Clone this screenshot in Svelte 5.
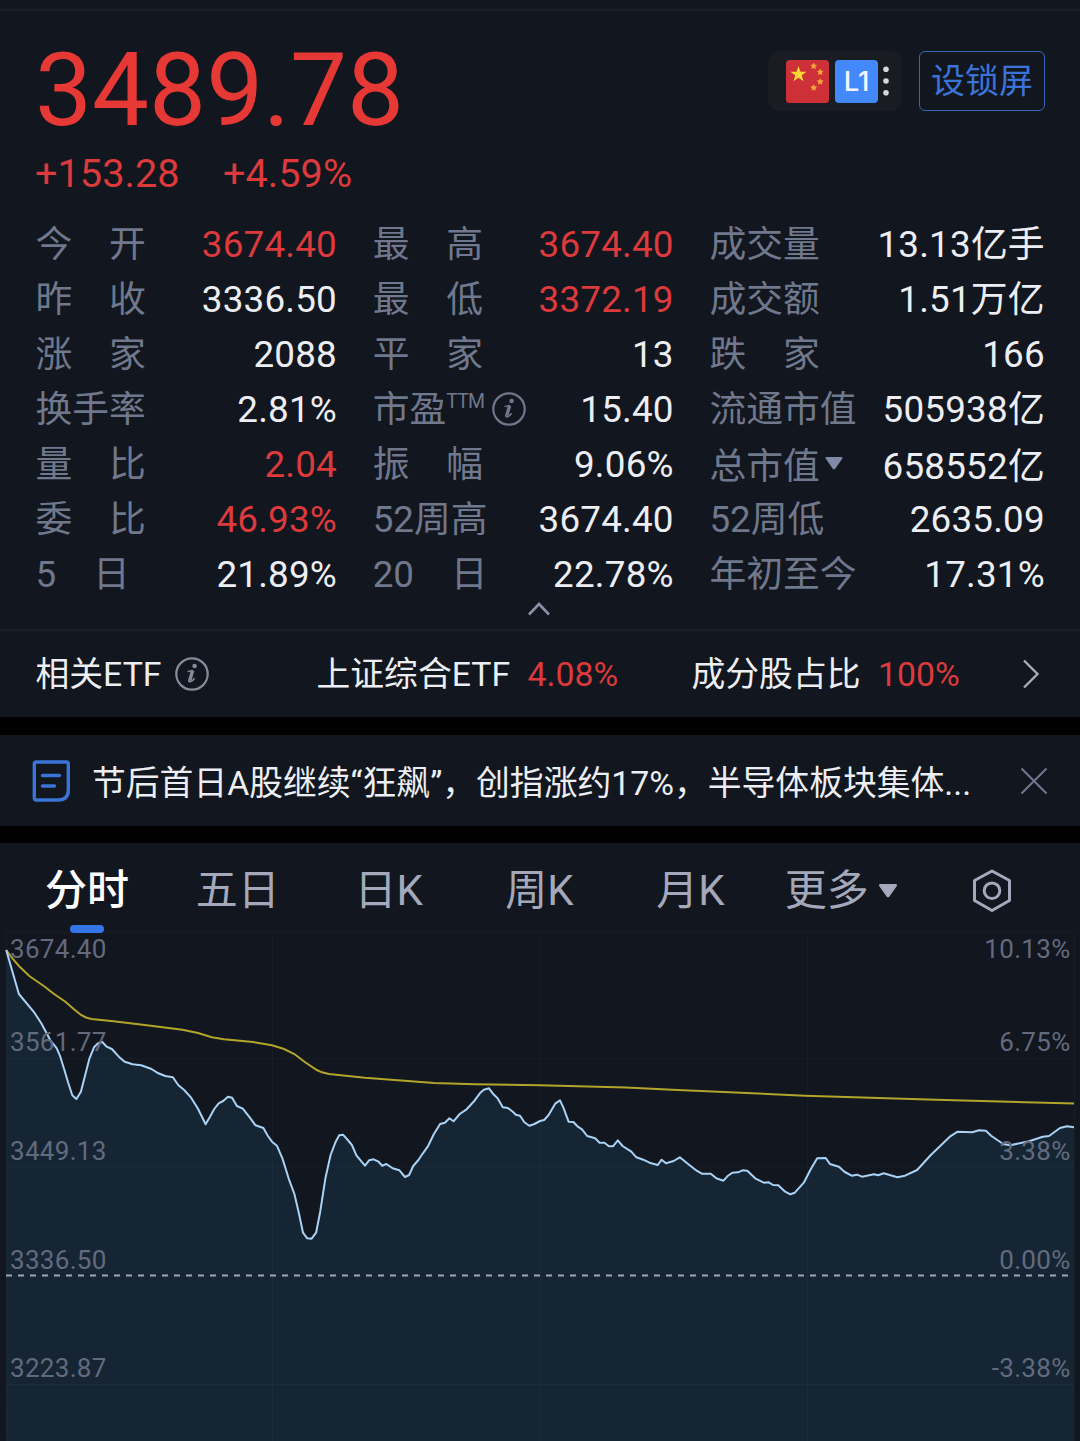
<script lang="ts">
	type Stat = {
		label: string;
		value: string;
		up?: boolean;
		sup?: string;
		info?: boolean;
		menu?: boolean;
	};

	const stats: Stat[] = [
		{ label: '今\u3000开', value: '3674.40', up: true },
		{ label: '最\u3000高', value: '3674.40', up: true },
		{ label: '成交量', value: '13.13亿手' },
		{ label: '昨\u3000收', value: '3336.50' },
		{ label: '最\u3000低', value: '3372.19', up: true },
		{ label: '成交额', value: '1.51万亿' },
		{ label: '涨\u3000家', value: '2088' },
		{ label: '平\u3000家', value: '13' },
		{ label: '跌\u3000家', value: '166' },
		{ label: '换手率', value: '2.81%' },
		{ label: '市盈', sup: 'TTM', info: true, value: '15.40' },
		{ label: '流通市值', value: '505938亿' },
		{ label: '量\u3000比', value: '2.04', up: true },
		{ label: '振\u3000幅', value: '9.06%' },
		{ label: '总市值', value: '658552亿', menu: true },
		{ label: '委\u3000比', value: '46.93%', up: true },
		{ label: '52周高', value: '3674.40' },
		{ label: '52周低', value: '2635.09' },
		{ label: '5\u3000日', value: '21.89%' },
		{ label: '20\u3000日', value: '22.78%' },
		{ label: '年初至今', value: '17.31%' }
	];

	const tabs = ['分时', '五日', '日K', '周K', '月K', '更多'];
	let activeTab = $state('分时');
	let showNews = $state(true);

	const axis = [
		{ y: 957.5, price: '3674.40', pct: '10.13%' },
		{ y: 1050.5, price: '3561.77', pct: '6.75%' },
		{ y: 1159.5, price: '3449.13', pct: '3.38%' },
		{ y: 1268.5, price: '3336.50', pct: '0.00%' },
		{ y: 1376.5, price: '3223.87', pct: '-3.38%' }
	];

	// intraday index line
	const price =
		'6.2,950 18.9,994 34.4,1012.7 41.3,1023.3 50.6,1040.7 56.8,1048.3 60.3,1056.7 64.4,1070 68.2,1082.7 72.3,1095.3 76.4,1099 80.9,1091.7 85.4,1074.3 89.5,1058.3 94,1047.3 98.1,1043.3 102.3,1042 106.7,1046.7 111.9,1049 118.8,1056.7 124.7,1061.7 132.6,1064.3 141.2,1065.3 151.5,1069 158.4,1073.3 165.3,1076 172.9,1077.3 178.4,1085.3 184.2,1090 191.1,1097.7 198,1108.7 203.2,1119.3 205.6,1124.3 210,1116.7 214.2,1109 218.7,1103.3 223.1,1101 228,1096.7 232.1,1097.7 236.9,1106 242.8,1108.7 249.7,1117.3 255.5,1125.3 263.4,1128 267.9,1136 272,1141.7 276.9,1145.7 282.4,1158.3 288.6,1178.3 294.4,1194 298.9,1213.3 303,1232.7 307.2,1238.3 311.6,1238.7 316.1,1232.7 320.2,1211.7 325.4,1178.3 330.6,1155 335.7,1141.7 339.2,1135.3 343,1134.7 347.8,1140 351.9,1145 356.4,1155.3 361.6,1161.7 365,1165.7 369.1,1160.3 373.6,1159.3 378.1,1161.3 382.2,1165.7 386.4,1164 392.6,1168.3 399.4,1170.3 405,1177 409.1,1175 413.2,1166 418.4,1160 422.9,1153.3 427.7,1146.7 433.9,1134 440.1,1124 444.9,1122.7 449.4,1118.3 453.5,1121.3 459.7,1114 466.6,1109.3 474.5,1100.7 480.4,1092.7 483.8,1089.7 489,1088.3 493.5,1094.3 497.6,1098.3 502.8,1107.3 507.9,1108 513.1,1112 515.8,1114.7 520,1115.7 524.4,1122.3 529.3,1125.7 534.4,1124 540,1121 ' +
		'544.1,1120 548.6,1115 555.5,1103.3 560,1100.3 563.4,1107.7 568.6,1121.7 573.4,1122 577.9,1126.7 582,1129.3 587.2,1136 595.1,1138.3 599.6,1142.7 604.4,1142.7 608.9,1146.3 613,1146.3 617.8,1140.3 622.6,1146 631.3,1151.7 636.4,1157.3 643.3,1159.7 649.5,1162.7 657.8,1165 661.6,1159.7 666,1163.3 673.6,1161 679.8,1157.3 688.1,1164 696.7,1170.7 701.8,1173.7 710.8,1173.7 716.3,1178.3 723.5,1180.7 728,1175.7 732.2,1172.7 738,1172.3 742.5,1170.3 747.3,1170.7 755.2,1178.3 763.8,1182.7 768.7,1182.3 773.1,1185 778.3,1185.3 785.2,1191.7 790.3,1194.3 794.8,1192.7 803.8,1182.7 810.3,1170 817.2,1158.3 825.8,1158 829.9,1164 838.9,1166.7 844.8,1172 851.6,1175.7 857.2,1174.7 862,1176.7 874,1174.3 878.2,1175.3 883.7,1173.3 897.4,1177.3 905,1175.7 917.1,1170 930.8,1155 939.4,1146.7 949.8,1136.7 957.7,1131.7 972.2,1132.3 979,1130.3 985.9,1130.7 991.1,1135.7 1003.2,1144 1010,1145.3 1029,1141.3 1042.8,1136.7 1049,1136 1060,1128 1066.9,1126.3 1074,1127.3';

	// average price line
	const average =
		'6.2,950 12,958 18.9,966 29.3,976 44.8,986.7 53.4,993.5 65.4,1001.7 74,1009.3 81,1015 86,1017.5 91.3,1019 113.6,1021.3 144.6,1025 182.5,1029.7 198,1033 211.8,1037.3 223.8,1039.3 253,1042 272,1045.3 284,1049 294.4,1054 304.8,1062 316.8,1070 322,1072.3 328.9,1074 365,1077.7 434,1083 475,1084.3 540,1085.3 626,1087.6 677.7,1090 805,1095.7 936,1099.7 1074,1103.5';
</script>

{#snippet infoIcon()}
	<svg class="info" width="34" height="34" viewBox="0 0 34 34" fill="none" stroke="currentColor">
		<circle cx="17" cy="17" r="15.7" stroke-width="2.2" />
		<circle cx="19.6" cy="9" r="2.3" fill="currentColor" stroke="none" />
		<path d="M12.6 14.6c2-.2 3.6-.8 5.2-1.5" stroke-width="1.5" />
		<path d="M17.6 13.6L14.8 23.5" stroke-width="3.4" />
		<path d="M13.8 22.8c-.6 3 3 2.5 5.8-1.6" stroke-width="1.6" />
	</svg>
{/snippet}

<main>
	<section class="overview">
		<div class="top">
			<div>
				<div class="last">3489.78</div>
				<div class="change"><span>+153.28</span><span>+4.59%</span></div>
			</div>
			<div class="actions">
				<div class="badges">
					<svg width="43" height="43" viewBox="0 0 43 43">
						<rect width="43" height="43" rx="3.5" fill="#cd3037" />
						<path
							d="M12.5 6l2 5.7h6.1l-4.9 3.6 1.8 5.9-5-3.5-5 3.5 1.8-5.9-4.9-3.6h6.1z"
							fill="#fdd835"
						/>
						{#each [[27.7, 6], [34.2, 12], [34.2, 21.6], [27.7, 27.6]] as [x, y]}
							<path
								transform="translate({x} {y})"
								d="M0-2.9l.9 1.8 2 .3-1.4 1.4.3 2-1.8-.9-1.8.9.3-2-1.4-1.4 2-.3z"
								fill="#f3a43a"
								stroke="#f3a43a"
								stroke-width=".6"
							/>
						{/each}
					</svg>
					<span class="level">L1</span>
					<svg width="6" height="30" viewBox="0 0 6 30" fill="#d6d8dc">
						<circle cx="3" cy="3.2" r="2.8" />
						<circle cx="3" cy="15" r="2.8" />
						<circle cx="3" cy="26.8" r="2.8" />
					</svg>
				</div>
				<button class="lock">设锁屏</button>
			</div>
		</div>

		<div class="stats">
			{#each stats as s}
				<div class="stat" class:lower={s.menu}>
					<span class="label">
						{s.label}{#if s.sup}<sup>{s.sup}</sup>{/if}
						{#if s.info}{@render infoIcon()}{/if}
						{#if s.menu}
							<svg class="caret" width="18" height="13" viewBox="0 0 18 13">
								<path d="M1.5 0h15q1.6.4.7 1.8l-7 10q-1.2 1.2-2.4 0l-7-10Q-.1.4 1.5 0z" fill="currentColor" />
							</svg>
						{/if}
					</span>
					<span class="value" class:up={s.up}>{s.value}</span>
				</div>
			{/each}
		</div>
		<div class="collapse">
			<svg width="24" height="16" viewBox="0 0 24 16" fill="none" stroke="#8b91a3" stroke-width="2.6">
				<path d="M2 12.5L12 2l10 10.5" />
			</svg>
		</div>
	</section>

	<section class="etf">
		<span class="etf-title">相关ETF {@render infoIcon()}</span>
		<span class="etf-item">上证综合ETF<b>4.08%</b></span>
		<span class="etf-item ratio">成分股占比<b>100%</b></span>
		<svg width="18" height="30" viewBox="0 0 18 30" fill="none" stroke="#a6abb8" stroke-width="2.4">
			<path d="M2 1.5L15.5 15 2 28.5" />
		</svg>
	</section>

	{#if showNews}
		<section class="news">
			<svg width="38" height="42" viewBox="0 0 38 42" fill="none" stroke="#3a74d8" stroke-width="3.4">
				<path d="M2.3 4q0-2 2-2h30q2 0 2 2v26q0 10-10 10H4.3q-2 0-2-2z" stroke-linejoin="round" />
				<path d="M10.5 15.5h17M10.5 26h12" stroke-linecap="round" />
			</svg>
			<span class="headline">节后首日A股继续“狂飙”，创指涨约17%，半导体板块集体...</span>
			<button class="close" aria-label="关闭" onclick={() => (showNews = false)}>
				<svg width="28" height="28" viewBox="0 0 28 28" stroke="#6f7890" stroke-width="2">
					<path d="M1.5 1.5l25 25M26.5 1.5l-25 25" />
				</svg>
			</button>
		</section>
	{/if}

	<section class="chart">
		<nav>
			{#each tabs as tab}
				<button class="tab" class:active={tab === activeTab} onclick={() => (activeTab = tab)}>
					{tab}
					{#if tab === '更多'}
						<svg class="caret" width="20" height="14" viewBox="0 0 18 13">
							<path d="M1.5 0h15q1.6.4.7 1.8l-7 10q-1.2 1.2-2.4 0l-7-10Q-.1.4 1.5 0z" fill="currentColor" />
						</svg>
					{/if}
				</button>
			{/each}
			<button class="tab" aria-label="设置">
				<svg width="42" height="46" viewBox="0 0 42 46" fill="none" stroke="#a3a9ba" stroke-width="3">
					<path d="M21 3L38.5 12.5v20L21 42.5 3.5 32.5v-20z" stroke-linejoin="round" />
					<circle cx="21" cy="22.7" r="7.8" />
				</svg>
			</button>
		</nav>

		<svg class="plot" width="1080" height="509" viewBox="0 932 1080 509">
			<polygon points="{price} 1074,1441 6,1441" fill="#162534" />
			<g class="grid">
				{#each [6, 272, 540, 807, 1074] as x}
					<line x1={x + 0.5} x2={x + 0.5} y1="932" y2="1441" />
				{/each}
				{#each [932.5, 1058.5, 1166.5, 1384.5] as y}
					<line x1="6" x2="1074" y1={y} y2={y} />
				{/each}
			</g>
			<line class="base" x1="6" x2="1069" y1="1275.5" y2="1275.5" />
			<polyline points={average} fill="none" stroke="#b3a52b" stroke-width="2" />
			<polyline points={price} fill="none" stroke="#a9d2f5" stroke-width="2" stroke-linejoin="round" />
			{#each axis as a}
				<text x="10" y={a.y}>{a.price}</text>
				<text x="1070.5" y={a.y} text-anchor="end">{a.pct}</text>
			{/each}
		</svg>
	</section>
</main>

<style>
	:global(body) {
		background: #000;
	}

	main {
		width: 1080px;
		height: 1441px;
		overflow: hidden;
		display: flex;
		flex-direction: column;
		font-family: Roboto, 'Noto Sans CJK SC', sans-serif;
		color: #eceef3;
		background: #000;
	}

	svg {
		display: block;
		flex-shrink: 0;
	}

	button {
		padding: 0;
		border: 0;
		background: none;
		font-family: inherit;
		color: inherit;
		cursor: pointer;
	}

	section {
		background: #12161e;
		box-sizing: border-box;
		flex-shrink: 0;
	}

	.overview {
		height: 631px;
		padding-top: 9px;
		border-bottom: 2px solid #191d25;
	}

	.top {
		display: flex;
		justify-content: space-between;
		height: 208px;
		padding: 29px 35px 0 35px;
		border-top: 2px solid #191d25;
		box-sizing: border-box;
	}

	.last {
		font-size: 101.5px;
		line-height: 102px;
		color: #e63835;
	}

	.change {
		display: flex;
		gap: 43.5px;
		margin-top: 7px;
		font-size: 39.7px;
		line-height: 50px;
		color: #dc3a3c;
	}

	.actions {
		display: flex;
		gap: 17px;
		margin-top: 11px;
		height: 60px;
	}

	.badges {
		display: flex;
		align-items: center;
		gap: 6px;
		width: 134px;
		padding-left: 18px;
		box-sizing: border-box;
		border-radius: 12px;
		background: #191c23;
	}

	.badges svg:last-child {
		margin-left: -1px;
	}

	.level {
		width: 43px;
		height: 43px;
		border-radius: 4px;
		background: #4489fb;
		color: #f2f6ff;
		font: 500 27.5px/43px Inter, sans-serif;
		text-align: center;
	}

	.lock {
		width: 126px;
		border: 1.5px solid #3866b4;
		border-radius: 6px;
		font-size: 34px;
		line-height: 57px;
		color: #3a74d8;
	}

	.stats {
		display: grid;
		grid-template-columns: 301.5px 301px 335.5px;
		column-gap: 35.7px;
		grid-auto-rows: 55px;
		padding-left: 35.5px;
	}

	.stat {
		display: flex;
		justify-content: space-between;
		font-size: 36.8px;
		line-height: 55px;
		white-space: nowrap;
	}

	.lower {
		position: relative;
		top: 2px;
	}

	.label {
		display: flex;
		align-items: center;
		color: #6f788c;
	}

	.label sup {
		align-self: flex-start;
		font-size: 19.5px;
		line-height: 39px;
		letter-spacing: -0.9px;
	}

	.label .info {
		margin: -2px 0 0 7.5px;
	}

	.label .caret {
		margin: -6px 0 0 5px;
		color: #7f8aa6;
	}

	.value {
		letter-spacing: 0.2px;
	}

	.up {
		color: #dc3a3c;
	}

	.collapse {
		display: flex;
		justify-content: center;
		padding-right: 2px;
	}

	.etf {
		display: flex;
		align-items: center;
		height: 86px;
		padding-left: 35.5px;
		font-size: 33.8px;
		line-height: 42px;
	}

	.etf-title {
		display: flex;
		align-items: center;
		width: 281px;
		padding-top: 2px;
	}

	.etf-title .info {
		margin: -2px 0 0 14px;
		color: #858b99;
	}

	.etf-item {
		width: 375px;
		padding-top: 2px;
	}

	.ratio {
		width: 330.5px;
	}

	.etf b {
		margin-left: 17.5px;
		font-weight: 400;
		color: #dc3a3c;
	}

	.news {
		display: flex;
		align-items: center;
		height: 91px;
		margin-top: 18px;
		padding-left: 32px;
	}

	.headline {
		width: 928px;
		margin-left: 22px;
		font-size: 33.8px;
		white-space: nowrap;
	}

	.chart {
		height: 598px;
		margin-top: 17px;
	}

	nav {
		display: flex;
		height: 89px;
		padding: 0 12px 0 12px;
	}

	.tab {
		position: relative;
		flex: 1;
		display: flex;
		align-items: center;
		justify-content: center;
		gap: 9px;
		padding: 7px 1px 0 0;
		font-size: 42px;
		line-height: 82px;
		color: #a3a9ba;
	}

	.tab.active {
		font-weight: 500;
		color: #fff;
	}

	.tab.active::after {
		content: '';
		position: absolute;
		left: 58px;
		bottom: -1px;
		width: 34px;
		height: 8px;
		border-radius: 4px;
		background: #3476e6;
	}

	.grid line {
		stroke: #8fa3c0;
		stroke-opacity: 0.045;
	}

	.base {
		stroke: #9aa8b6;
		stroke-width: 2;
		stroke-dasharray: 6 6;
	}

	.plot text {
		font-size: 26px;
		letter-spacing: 0.3px;
		fill: #626a7e;
	}
</style>
